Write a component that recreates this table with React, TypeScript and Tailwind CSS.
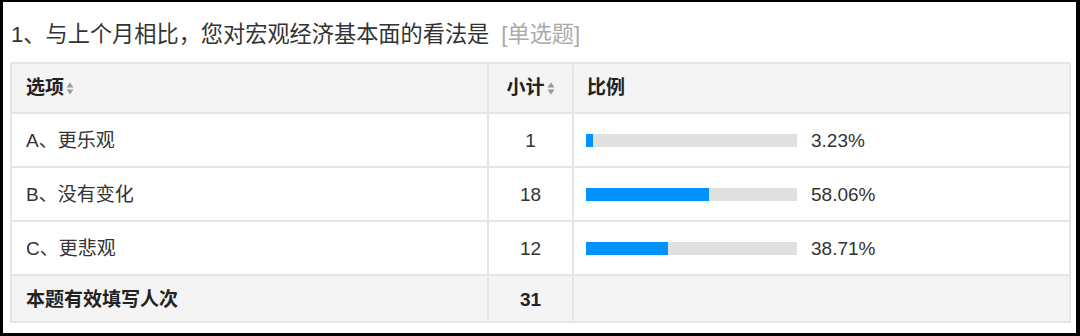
import React from "react";

const FONT = { fontFamily: '"Liberation Sans", Arial, "Noto Sans CJK SC", sans-serif' };

function SortIcon() {
  return (
    <svg width="8" height="13" viewBox="0 0 8 13" className="ml-[2px] shrink-0">
      <polygon points="0.5,5.5 4,0.5 7.5,5.5" fill="#999999" />
      <polygon points="0.5,7.5 7.5,7.5 4,12.5" fill="#999999" />
    </svg>
  );
}

const rows = [
  { label: "A、更乐观", count: 1, pct: 3.23 },
  { label: "B、没有变化", count: 18, pct: 58.06 },
  { label: "C、更悲观", count: 12, pct: 38.71 },
];

export default function App() {
  return (
    <div
      className="w-[1080px] h-[336px] bg-white border-black border-l-[3px] border-t-[2px] border-r-[4px] border-b-[3px] text-[#333]"
      style={FONT}
    >
      <div className="h-[60px] pl-[8px] pt-[18px] flex items-start">
        <span className="text-[22.2px] leading-[30px] text-[#333]">
          1、与上个月相比，您对宏观经济基本面的看法是
        </span>
        <span className="text-[22.2px] leading-[30px] text-[#aaaaaa] ml-[12px]">[单选题]</span>
      </div>
      <div className="ml-[7px] w-[1061px] border-2 border-[#e6e6e6]">
        <div className="grid grid-cols-[475px_85px_1fr] h-[48px] pt-[1px] bg-[#f4f4f4] text-[19px] font-bold text-[#222]">
          <div className="flex items-center pl-[14px]">
            <span>选项</span>
            <SortIcon />
          </div>
          <div className="flex items-center justify-center border-l-2 border-[#e6e6e6]">
            <span>小计</span>
            <SortIcon />
          </div>
          <div className="flex items-center pl-[13px] border-l-2 border-[#e6e6e6]">
            <span>比例</span>
          </div>
        </div>
        {rows.map((r) => (
          <div
            key={r.label}
            className="grid grid-cols-[475px_85px_1fr] h-[54px] border-t-2 border-[#e6e6e6] text-[19px] text-[#333]"
          >
            <div className="flex items-center pl-[14px] pt-[2px]">{r.label}</div>
            <div className="flex items-center justify-center pt-[2px] border-l-2 border-[#e6e6e6]">{r.count}</div>
            <div className="flex items-center pl-[12px] border-l-2 border-[#e6e6e6]">
              <div className="w-[211px] h-[13px] bg-[#e0e0e0]">
                <div className="h-full bg-[#0092ff]" style={{ width: `${r.pct}%` }} />
              </div>
              <span className="ml-[14px] pt-[2px]">{r.pct.toFixed(2)}%</span>
            </div>
          </div>
        ))}
        <div className="grid grid-cols-[475px_85px_1fr] h-[47px] border-t-2 border-[#e6e6e6] bg-[#f4f4f4] text-[19px] font-bold text-[#222]">
          <div className="flex items-center pl-[14px] pt-[3px]">本题有效填写人次</div>
          <div className="flex items-center justify-center pt-[3px] border-l-2 border-[#e6e6e6]">31</div>
          <div className="border-l-2 border-[#e6e6e6]" />
        </div>
      </div>
    </div>
  );
}
